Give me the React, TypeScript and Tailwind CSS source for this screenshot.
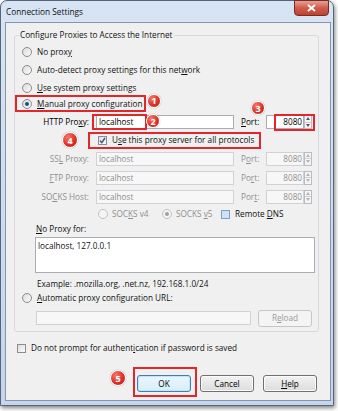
import React from "react";

const U = ({ children }: { children: React.ReactNode }) => (
  <span className="underline underline-offset-[1px] decoration-[0.5px]">{children}</span>
);

function Radio({ checked = false, disabled = false }: { checked?: boolean; disabled?: boolean }) {
  return (
    <span
      className={
        "w-[10px] h-[10px] rounded-full border flex items-center justify-center shrink-0 " +
        (disabled
          ? "border-[#c2c2c2] bg-[#f4f4f4]"
          : "border-[#8b8c8c] bg-gradient-to-br from-[#dcdcdc] to-[#fbfbfb]")
      }
    >
      {checked && (
        <span
          className={
            "w-[4px] h-[4px] rounded-full " + (disabled ? "bg-[#a0a0a0]" : "bg-[#1c4e8c]")
          }
        />
      )}
    </span>
  );
}

function Checkbox({ checked = false, blue = false }: { checked?: boolean; blue?: boolean }) {
  return (
    <span
      className={
        "w-[9px] h-[9px] border flex items-center justify-center shrink-0 " +
        (blue
          ? "border-[#7e9fc6] bg-[#cde2f7]"
          : "border-[#8b8c8c] bg-gradient-to-br from-[#dedede] to-[#fafafa]")
      }
    >
      {checked && (
        <svg width="7" height="7" viewBox="0 0 7 7">
          <path d="M1 3.6 L2.8 5.6 L6 1" fill="none" stroke="#3a4f8c" strokeWidth="1.4" />
        </svg>
      )}
    </span>
  );
}

function Spinner({ disabled = false }: { disabled?: boolean }) {
  const c = disabled ? "#b4b4b4" : "#5a5a5a";
  return (
    <span className="w-[8px] h-[14px] border border-[#b9bcc2] bg-[#f4f4f4] flex flex-col shrink-0">
      <span className="flex-1 flex items-center justify-center border-b border-[#d0d0d0]">
        <svg width="4" height="3" viewBox="0 0 4 3">
          <path d="M0 3 L2 0 L4 3Z" fill={c} />
        </svg>
      </span>
      <span className="flex-1 flex items-center justify-center">
        <svg width="4" height="3" viewBox="0 0 4 3">
          <path d="M0 0 L4 0 L2 3Z" fill={c} />
        </svg>
      </span>
    </span>
  );
}

function Badge({ n, size = 14 }: { n: number; size?: number }) {
  return (
    <span
      className={
        "rounded-full border border-white flex items-center justify-center text-white font-bold text-[9px] leading-none shadow-[0_0_1px_rgba(0,0,0,0.5)] bg-[radial-gradient(circle_at_35%_30%,#f47a6c,#dc3127_55%,#b8211a)] " +
        (size === 14 ? "w-[14px] h-[14px]" : "w-[16px] h-[16px]")
      }
    >
      {n}
    </span>
  );
}

function ProxyRow({
  label,
  value,
  port,
  portLabel,
  disabled,
  h,
}: {
  label: React.ReactNode;
  value: string;
  port: string;
  portLabel: React.ReactNode;
  disabled?: boolean;
  h: string;
}) {
  const txt = disabled ? "text-[#8f8f8f]" : "text-black";
  const box = disabled ? "bg-[#f7f7f7] border-[#cfd2d6]" : "bg-white border-[#abadb3]";
  return (
    <div className={"flex items-center " + h}>
      <span className={"w-[74px] text-right " + txt}>{label}</span>
      <span className={"ml-[7px] w-[138px] h-[14px] border flex items-center pl-[2px] " + box + " " + txt}>
        {value}
      </span>
      <span className={"ml-[7px] w-[20px] " + txt}>{portLabel}</span>
      <span className={"ml-[5px] w-[38px] h-[14px] border flex items-center justify-end pr-[1px] " + box + " " + txt}>
        {port}
      </span>
      <Spinner disabled={disabled} />
    </div>
  );
}

function Button({ children, def = false, disabled = false }: { children: React.ReactNode; def?: boolean; disabled?: boolean }) {
  return (
    <span
      className={
        "w-[54px] h-[17px] rounded-[3px] border flex items-center justify-center " +
        (disabled
          ? "border-[#c4c6c8] bg-[#f4f4f4] text-[#9a9a9a]"
          : def
          ? "border-[#3c7fb1] bg-gradient-to-b from-[#eaf6fd] to-[#d9eefb] text-black shadow-[inset_0_0_0_1px_#c4e5f6]"
          : "border-[#707070] bg-gradient-to-b from-[#f2f2f2] to-[#dcdcdc] text-black shadow-[inset_0_0_0_1px_#fbfbfb]")
      }
    >
      {children}
    </span>
  );
}

export default function App() {
  return (
    <div className="w-[338px] h-[411px] bg-white font-['Open_Sans',sans-serif] text-[8.2px] leading-[12px] text-[#111] whitespace-nowrap">
      <div className="w-[334px] h-[406px] border border-[#56657a] rounded-t-[7px] bg-gradient-to-b from-[#d7e4f4] to-[#c4d6ec] pl-[4px] pr-[2px] pb-[4px] shadow-[1px_2px_4px_rgba(0,0,0,0.5)] flex flex-col">
        <div className="h-[21px] relative flex items-center pl-[1px] text-[8.3px]">
          Connection Settings
          <span className="absolute -top-[1px] right-[2px] w-[35px] h-[16px] rounded-b-[4px] border border-[#7a2a22] bg-gradient-to-b from-[#e3a195] via-[#cf5c4c] to-[#c0402e] flex items-center justify-center">
            <svg width="9" height="8" viewBox="0 0 9 8">
              <path d="M1 1 L8 7 M8 1 L1 7" stroke="white" strokeWidth="1.8" />
            </svg>
          </span>
        </div>
        <div className="h-[379px] border border-[#8595ab] bg-[#f0f0f0] flex flex-col">
          <div className="relative ml-[8px] mt-[12px] w-[305px] border border-[#d5dadf] rounded-[3px] pt-[7px] pb-[4px]">
            <span className="absolute left-[4px] -top-[7px] px-[1px] bg-[#f0f0f0]">
              Configure Proxies to Access the Internet
            </span>

            <div className="h-[18px] pl-[7px] flex items-center gap-[5px]">
              <Radio />
              <span>
                No prox<U>y</U>
              </span>
            </div>
            <div className="h-[18px] pl-[7px] flex items-center gap-[5px]">
              <Radio />
              <span>
                Auto-detect proxy settings for this net<U>w</U>ork
              </span>
            </div>
            <div className="h-[17px] pl-[7px] flex items-center gap-[5px]">
              <Radio />
              <span>
                <U>U</U>se system proxy settings
              </span>
            </div>
            <div className="h-[17px] flex items-center">
              <span className="w-[131px] h-[17px] border-2 border-[#e3262b] pl-[5px] flex items-center gap-[5px] -mt-[2px]">
                <Radio checked />
                <span>
                  <U>M</U>anual proxy configuration
                </span>
              </span>
              <span className="ml-[1px] -mt-[8px]">
                <Badge n={1} />
              </span>
            </div>

            <div className="relative">
              <ProxyRow
                h="h-[18px]"
                label={
                  <>
                    HTTP Pro<U>x</U>y:
                  </>
                }
                value="localhost"
                portLabel={
                  <>
                    <U>P</U>ort:
                  </>
                }
                port="8080"
              />
              <span className="absolute left-[77px] top-[1px] w-[55px] h-[16px] border-2 border-[#e3262b]" />
              <span className="absolute left-[259px] top-[1px] w-[41px] h-[17px] border-2 border-[#e3262b]" />
              <span className="absolute left-[131px] top-[1px]">
                <Badge n={2} />
              </span>
              <span className="absolute left-[236px] -top-[12px]">
                <Badge n={3} />
              </span>
            </div>

            <div className="h-[18px] flex items-center">
              <span className="ml-[47px]">
                <Badge n={4} size={16} />
              </span>
              <span className="ml-[10px] w-[173px] h-[17px] border-2 border-[#e3262b] pl-[8px] flex items-center gap-[5px]">
                <Checkbox checked />
                <span>
                  U<U>s</U>e this proxy server for all protocols
                </span>
              </span>
            </div>

            <ProxyRow
              disabled
              h="h-[19px]"
              label={
                <>
                  SS<U>L</U> Proxy:
                </>
              }
              value="localhost"
              portLabel={
                <>
                  P<U>o</U>rt:
                </>
              }
              port="8080"
            />
            <ProxyRow
              disabled
              h="h-[19px]"
              label={
                <>
                  <U>F</U>TP Proxy:
                </>
              }
              value="localhost"
              portLabel={
                <>
                  Po<U>r</U>t:
                </>
              }
              port="8080"
            />
            <ProxyRow
              disabled
              h="h-[19px]"
              label={
                <>
                  SO<U>C</U>KS Host:
                </>
              }
              value="localhost"
              portLabel={
                <>
                  Por<U>t</U>:
                </>
              }
              port="8080"
            />

            <div className="h-[16px] flex items-center pl-[83px]">
              <span className="w-[64px] flex items-center gap-[4px] text-[#8f8f8f]">
                <Radio disabled />
                <span>
                  SOC<U>K</U>S v4
                </span>
              </span>
              <span className="w-[59px] flex items-center gap-[4px] text-[#8f8f8f]">
                <Radio disabled checked />
                <span>
                  SOCKS <U>v</U>5
                </span>
              </span>
              <span className="flex items-center gap-[5px]">
                <Checkbox blue />
                <span>
                  Remote <U>D</U>NS
                </span>
              </span>
            </div>

            <div className="h-[14px] pl-[21px] flex items-center">
              <span>
                <U>N</U>o Proxy for:
              </span>
            </div>
            <div className="mt-[1px] ml-[20px] w-[280px] h-[36px] border border-[#abadb3] bg-white pl-[2px] pt-[2px]">
              localhost, 127.0.0.1
            </div>
            <div className="mt-[4px] h-[14px] pl-[22px] flex items-center">Example: .mozilla.org, .net.nz, 192.168.1.0/24</div>
            <div className="h-[14px] pl-[7px] flex items-center gap-[5px]">
              <Radio />
              <span>
                <U>A</U>utomatic proxy configuration URL:
              </span>
            </div>
            <div className="mt-[4px] h-[18px] flex items-center">
              <span className="ml-[21px] w-[215px] h-[14px] border border-[#cfd2d6] bg-[#f7f7f7]" />
              <span className="ml-[7px]">
                <Button disabled>
                  R<U>e</U>load
                </Button>
              </span>
            </div>
          </div>

          <div className="mt-[9px] h-[14px] pl-[11px] flex items-center gap-[5px]">
            <Checkbox />
            <span>
              Do not prompt for authent<U>i</U>cation if password is saved
            </span>
          </div>

          <div className="mt-[12px] flex items-start justify-end pr-[13px]">
            <span className="mt-[3px]">
              <Badge n={5} size={16} />
            </span>
            <span className="ml-[7px] w-[64px] h-[30px] border-2 border-[#e3262b] pl-[2px] pt-[6px]">
              <Button def>OK</Button>
            </span>
            <span className="ml-[3px] mt-[8px]">
              <Button>Cancel</Button>
            </span>
            <span className="ml-[9px] mt-[8px]">
              <Button>
                <U>H</U>elp
              </Button>
            </span>
          </div>
        </div>
      </div>
    </div>
  );
}
